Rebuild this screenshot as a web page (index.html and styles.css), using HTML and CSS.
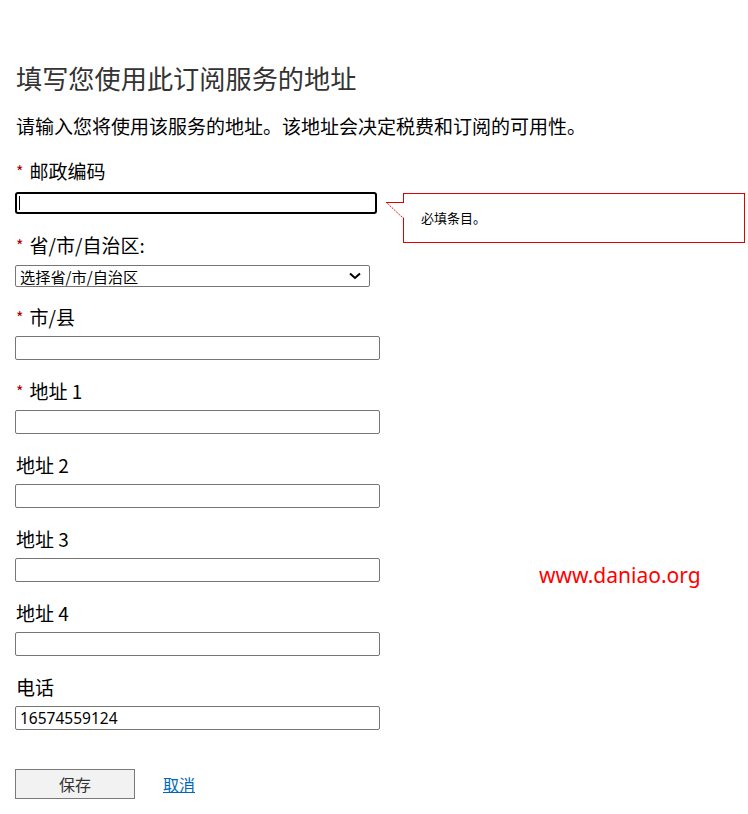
FILE: index.html
```html
<!DOCTYPE html>
<html lang="zh-CN">
<head>
<meta charset="utf-8">
<title>地址</title>
<link rel="stylesheet" href="styles.css">
</head>
<body>
<main class="page">
  <h1 class="title">填写您使用此订阅服务的地址</h1>
  <p class="intro">请输入您将使用该服务的地址。该地址会决定税费和订阅的可用性。</p>
  <form class="form">
    <div class="field field-first">
      <label class="label"><span class="req">*</span>邮政编码</label>
      <div class="control">
        <input class="input input-focus" type="text">
        <span class="caret"></span>
        <div class="tip">
          <svg class="tip-arrow" width="18" height="17" viewBox="0 0 18 17">
            <polygon points="0,0 18,0 18,16" fill="#fff"/>
            <line x1="0" y1="0.5" x2="18" y2="0.5" stroke="#e00000" stroke-width="1"/>
            <line x1="0.5" y1="0.5" x2="17.5" y2="16.5" stroke="#e00000" stroke-width="1" stroke-dasharray="1.5 1"/>
          </svg>
          <span class="tip-text">必填条目。</span>
        </div>
      </div>
    </div>
    <div class="field field-select">
      <label class="label"><span class="req">*</span>省/市/自治区:</label>
      <div class="select-wrap">
        <select class="select"><option>选择省/市/自治区</option></select>
        <svg class="chevron" width="12" height="8" viewBox="0 0 12 8"><polyline points="1,1.5 6,6 11,1.5" fill="none" stroke="#000" stroke-width="2"/></svg>
      </div>
    </div>
    <div class="field">
      <label class="label"><span class="req">*</span>市/县</label>
      <input class="input" type="text">
    </div>
    <div class="field">
      <label class="label"><span class="req">*</span>地址 1</label>
      <input class="input" type="text">
    </div>
    <div class="field">
      <label class="label">地址 2</label>
      <input class="input" type="text">
    </div>
    <div class="field">
      <label class="label">地址 3</label>
      <input class="input" type="text">
    </div>
    <div class="field">
      <label class="label">地址 4</label>
      <input class="input" type="text">
    </div>
    <div class="field field-last">
      <label class="label">电话</label>
      <input class="input" type="text" value="16574559124">
    </div>
    <div class="actions">
      <button class="btn" type="button">保存</button>
      <a class="link" href="#">取消</a>
    </div>
  </form>
</main>
<div class="watermark">www.daniao.org</div>
</body>
</html>
```

FILE: styles.css
```css
* { box-sizing: border-box; }
html, body { margin: 0; padding: 0; background: #fff; }
body {
  font-family: "Noto Sans CJK SC", "Noto Sans", sans-serif;
  color: #000;
  width: 748px;
  height: 814px;
  position: relative;
  overflow: hidden;
}
.page { padding: 61px 0 0 15px; }
.title {
  margin: 0 0 0 1px;
  font-size: 26.2px;
  line-height: 34px;
  font-weight: 400;
  color: #333;
}
.intro {
  margin: 18px 0 0 1px;
  font-size: 19px;
  line-height: 26px;
  color: #000;
}
.form { margin-top: 19px; }
.field { display: flex; flex-direction: column; align-items: flex-start; margin-bottom: 18px; }
.label {
  display: block;
  height: 26px;
  font-size: 19px;
  line-height: 26px;
  margin-left: 1px;
  margin-bottom: 6px;
  color: #000;
}
.req {
  display: inline-block;
  vertical-align: top;
  color: #a80000;
  font-size: 16px;
  line-height: 26px;
  height: 26px;
  margin-right: 6px;
}
.control { position: relative; }
.input {
  display: block;
  width: 365px;
  height: 24px;
  border: 1px solid #767676;
  border-radius: 2px;
  padding: 0 4px;
  font-family: "Noto Sans", sans-serif;
  font-size: 15.5px;
  color: #000;
  background: #fff;
  outline: none;
}
.field-first .label { margin-bottom: 8px; }
.input-focus {
  width: 362px;
  height: 22px;
  border: 2px solid #000;
  border-radius: 3px;
}
.caret {
  position: absolute;
  left: 4px;
  top: 4px;
  width: 1px;
  height: 14px;
  background: #000;
}
.tip {
  position: absolute;
  left: 388px;
  top: 1px;
  width: 342px;
  height: 50px;
  border: 1px solid #e00000;
  background: #fff;
  padding: 10px 0 0 17px;
}
.tip-arrow { position: absolute; left: -18px; top: 8px; }
.tip-text { font-size: 13px; line-height: 16px; color: #000; }
.field-select .label { margin-bottom: 7px; }
.field-select { margin-bottom: 17px; }
.select-wrap { position: relative; }
.select {
  display: block;
  appearance: none;
  -webkit-appearance: none;
  width: 355px;
  height: 22px;
  border: 1px solid #767676;
  border-radius: 2px;
  background: #fff;
  padding: 0 0 0 4px;
  font-family: "Noto Sans CJK SC", sans-serif;
  font-size: 15.2px;
  line-height: 20px;
  color: #000;
}
.chevron { position: absolute; left: 334px; top: 7px; pointer-events: none; }
.field-last { margin-bottom: 39px; }
.actions { display: flex; align-items: center; gap: 28px; }
.btn {
  width: 120px;
  height: 30px;
  background: #f2f2f2;
  border: 1px solid #7a7a7a;
  font-family: "Noto Sans CJK SC", sans-serif;
  font-size: 16px;
  color: #333;
  padding: 0;
}
.link {
  font-size: 16px;
  color: #0067b8;
  text-decoration: underline;
  line-height: 20px;
}
.watermark {
  position: absolute;
  left: 539px;
  top: 561px;
  font-family: "Noto Sans", sans-serif;
  font-size: 21px;
  line-height: 28px;
  color: #ff0000;
}
```
